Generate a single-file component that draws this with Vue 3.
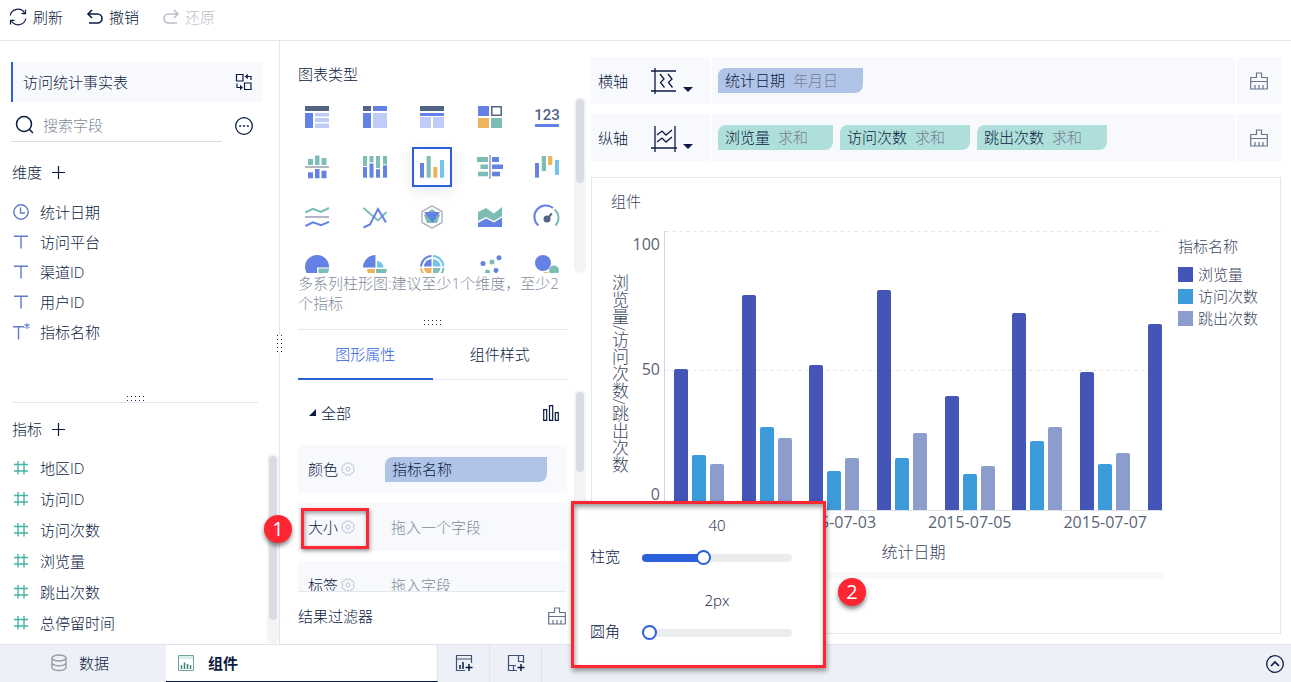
<script setup>
import { ref, computed } from 'vue'

const NAVY = '#526484'
const BLUE = '#6482e4'
const PALE = '#bfccf7'
const GREEN = '#7cbdb5'
const ORANGE = '#efb35b'
const CYAN = '#73c3ee'
const GRAY = '#b3b5c6'

const box = (x, y, w, h, fill) => ({ d: `M${x} ${y}h${w}v${h}h${-w}z`, fill })
const line = (d, stroke, width = 2) => ({ d, fill: 'none', stroke, width })
const dot = (x, y, r, fill) => ({ d: `M${x - r} ${y}a${r} ${r} 0 1 0 ${2 * r} 0a${r} ${r} 0 1 0 ${-2 * r} 0z`, fill })

const chartTypes = [
  { name: '分组表', shapes: [box(0, 1, 24, 5, NAVY), box(0, 8, 8, 15, BLUE), box(10, 8, 14, 3.5, PALE), box(10, 13, 14, 4, PALE), box(10, 18.5, 14, 4.5, PALE)] },
  { name: '交叉表', shapes: [box(0, 1, 8, 5, NAVY), box(10, 1, 14, 5, BLUE), box(0, 8, 8, 15, BLUE), box(10, 8, 14, 15, PALE)] },
  { name: '明细表', shapes: [box(0, 1, 24, 5, NAVY), box(0, 8, 24, 3, BLUE), box(0, 12, 11, 11, PALE), box(13, 12, 11, 11, PALE)] },
  { name: '颜色表格', shapes: [box(0, 1, 11, 10, BLUE), line('M13.8 1.8h9.4v8.4h-9.4z', NAVY, 1.5), box(0, 13, 11, 10, ORANGE), box(13, 13, 11, 10, GREEN)] },
  { name: 'KPI指标卡', text: '123', shapes: [box(0, 19, 24, 3, BLUE)] },
  { name: '对比柱状图', shapes: [box(3, 4, 5, 6, GREEN), box(10, 0.5, 4.5, 9.5, GREEN), box(16.5, 3, 5, 7, GREEN), box(0, 11, 24, 2, GRAY), box(3, 17.3, 5, 6, BLUE), box(10, 14, 4.5, 9.3, BLUE), box(16.5, 15.7, 5, 7.6, BLUE)] },
  { name: '堆积柱状图', shapes: [box(0, 1, 4, 10, GREEN), box(6.5, 1, 4, 6.3, GREEN), box(13, 1, 4, 12, GREEN), box(20, 1, 4, 8.3, GREEN), box(0, 12, 4, 10.7, BLUE), box(6.5, 8.5, 4, 14.2, BLUE), box(13, 14.3, 4, 8.4, BLUE), box(20, 10.3, 4, 12.4, BLUE)] },
  { name: '多系列柱形图', shapes: [box(0, 8, 4, 14.7, BLUE), box(6.7, 1, 4, 21.7, GREEN), box(13.3, 12, 4, 10.7, ORANGE), box(20, 5, 4, 17.7, CYAN)] },
  { name: '对比条形图', shapes: [box(-1, 2, 11, 5, GREEN), box(2.5, 9.5, 7.5, 4.5, GREEN), box(0, 16.7, 10, 4.6, GREEN), box(11, 0, 2, 24, GRAY), box(14, 2, 7, 5, BLUE), box(14, 9.5, 11, 4.5, BLUE), box(14, 16.7, 8, 4.6, BLUE)] },
  { name: '瀑布图', shapes: [box(0, 8, 4, 14.7, BLUE), box(6.7, 1, 4.3, 15, GREEN), box(13, 1, 4.3, 9, ORANGE), box(20, 5, 4, 15, CYAN)] },
  { name: '多系列折线图', shapes: [line('M.5 7.5L8 3.8l8 3.2 8-4', GREEN), line('M0 12h24', GRAY), line('M.5 21L8 17.3l8 2.9 8-3.4', BLUE)] },
  { name: '折线图', shapes: [line('M.5 3L15 15.5 23.5 7', GREEN), line('M.5 22.5L7 19.5 15 4l8 13.5', BLUE)] },
  { name: '雷达图', shapes: [line('M12 .8l10 5.7v11L12 23.2 2 17.500V6.500z', GRAY, 1.5), { d: 'M12 4l8 6-3 8H7l-3-8z', fill: GREEN }, { d: 'M4 7h16l-7.500 11z', fill: BLUE }] },
  { name: '面积图', shapes: [{ d: 'M0 7l8-4 8 5.500L24 2v9l-8 5-8-4-8 4z', fill: GREEN }, { d: 'M0 18l8-4.500 8 4 8-5V22H0z', fill: BLUE }] },
  { name: '仪表盘', shapes: [line('M3.500 20.500A11 11 0 0 1 18 3', BLUE), line('M19.500 4.500A11 11 0 0 1 20.500 20.500', GREEN), dot(12, 14, 3.5, NAVY), line('M12 14l4.800-5.500', NAVY)] },
  { name: '饼图', shapes: [{ d: 'M12 12.500h12A12 12 0 1 0 12 24z', fill: BLUE }, { d: 'M13.500 13.500H24A11 11 0 0 1 13.500 24z', fill: GREEN }] },
  { name: '玫瑰图', shapes: [{ d: 'M12.500 12.500H0A12.500 12.500 0 0 1 12.500 0z', fill: BLUE }, { d: 'M14 12.500V6A6.500 6.500 0 0 1 20.500 12.500z', fill: CYAN }, { d: 'M13 14h11A11 11 0 0 1 13 24z', fill: GREEN }, { d: 'M12 14H4A8 8 0 0 0 12 22z', fill: ORANGE }] },
  { name: '多层饼图', shapes: [line('M1 11.500A11 11 0 0 1 11.500 1', BLUE), line('M13 1A11 11 0 0 1 23.500 11.500', CYAN), line('M23.500 13A11 11 0 0 1 13 23', GREEN), line('M1 13A11 11 0 0 0 11.500 23', ORANGE), { d: 'M11.500 11.500H4A8 8 0 0 1 11.500 4z', fill: BLUE }, { d: 'M13 11.500V4A8 8 0 0 1 20.500 11.500z', fill: CYAN }, { d: 'M13 13h7.500A8 8 0 0 1 13 20z', fill: GREEN }, { d: 'M11.500 13H4A8 8 0 0 0 11.500 20z', fill: ORANGE }] },
  { name: '散点图', shapes: [dot(5, 8.5, 2.5, BLUE), dot(14, 7, 2.5, GREEN), dot(21, 2.7, 2.5, BLUE), dot(9.5, 17, 2.5, GREEN), dot(18, 15.5, 2.5, BLUE)] },
  { name: '气泡图', shapes: [dot(8, 8, 8, BLUE), dot(19, 15.5, 5, GREEN), dot(11, 21, 4, ORANGE)] },
]
const activeType = ref('多系列柱形图')

const dimensions = [
  { name: '统计日期', kind: 'date' },
  { name: '访问平台', kind: 'text' },
  { name: '渠道ID', kind: 'text' },
  { name: '用户ID', kind: 'text' },
  { name: '指标名称', kind: 'derived' },
]
const measures = ['地区ID', '访问ID', '访问次数', '浏览量', '跳出次数', '总停留时间']

const axes = [
  { name: '横轴', kind: 'x', fields: [{ name: '统计日期', mode: '年月日' }] },
  { name: '纵轴', kind: 'y', fields: [{ name: '浏览量', mode: '求和' }, { name: '访问次数', mode: '求和' }, { name: '跳出次数', mode: '求和' }] },
]

const series = ['浏览量', '访问次数', '跳出次数']
const days = [
  { label: '2015-07-01', values: [50.5, 19.6, 16.4] },
  { label: '', values: [77, 29.9, 25.9] },
  { label: '2015-07-03', values: [52, 13.9, 18.7] },
  { label: '', values: [78.9, 18.7, 27.7] },
  { label: '2015-07-05', values: [40.7, 12.9, 15.6] },
  { label: '', values: [70.7, 24.6, 29.9] },
  { label: '2015-07-07', values: [49.6, 16.5, 20.6] },
  { label: '', values: [66.7, 22, 18] },
]

const barWidth = ref(40)
const radius = ref(2)
const radiusFill = computed(() => radius.value - 2)
</script>

<template>
  <div class="page">
    <header class="topbar">
      <button class="tool">
        <svg width="18" height="18" viewBox="0 0 18 18" fill="none" stroke="currentColor" stroke-width="1.2">
          <path d="M1.200 7.500A7.800 7.800 0 0 1 15.500 5M16.800 10.500A7.800 7.800 0 0 1 2.500 13" />
          <path d="M16.500 1.500v4.200h-4M1.500 16.500v-4.200h4" />
        </svg>刷新
      </button>
      <button class="tool">
        <svg width="16" height="18" viewBox="0 0 16 18" fill="none" stroke="currentColor" stroke-width="1.600">
          <path d="M5 2L1 6l4 4M1 6h9.500a4.500 4.500 0 0 1 0 9H2" />
        </svg>撤销
      </button>
      <button class="tool" disabled>
        <svg width="16" height="18" viewBox="0 0 16 18" fill="none" stroke="currentColor" stroke-width="1.600">
          <path d="M11 2l4 4-4 4M15 6H5.500a4.500 4.500 0 0 0 0 9H14" />
        </svg>还原
      </button>
    </header>

    <main class="workspace">
      <aside class="fields">
        <div class="dataset">
          <span>访问统计事实表</span>
          <button class="icon" aria-label="切换数据">
            <svg width="18" height="18" viewBox="0 0 18 18" fill="none" stroke="currentColor" stroke-width="1.200">
              <path d="M1.500 1.500h6.500v6.500h-6.500zM9.500 10h6.500v6.500H9.500zM16 7V3.500h-5M2 10.500v4h4.500" />
              <path d="M12.800.8v5.400L9.800 3.500zM5 11.800v5.400l3-2.700z" fill="currentColor" stroke="none" />
            </svg>
          </button>
        </div>
        <div class="search">
          <label class="searchbox">
            <svg width="20" height="20" viewBox="0 0 20 20" fill="none" stroke="currentColor" stroke-width="1.500">
              <circle cx="9" cy="9" r="7.500" /><path d="M14.200 14.200l3.800 3.800" />
            </svg>
            <input type="text" placeholder="搜索字段" aria-label="搜索字段" />
          </label>
          <button class="icon" aria-label="更多">
            <svg width="20" height="20" viewBox="0 0 20 20" fill="none" stroke="currentColor" stroke-width="1.300">
              <circle cx="10" cy="10" r="8.300" />
              <path d="M5.200 10h2M9 10h2M12.800 10h2" stroke-width="1.600" />
            </svg>
          </button>
        </div>
        <section class="dims">
          <h2>维度
            <button class="icon" aria-label="添加维度"><svg width="13" height="13" viewBox="0 0 13 13"><path d="M6.500 0v13M0 6.500h13" stroke="currentColor" stroke-width="1.200" /></svg></button>
          </h2>
          <ul>
            <li v-for="f in dimensions" :key="f.name">
              <svg class="dim-icon" width="18" height="18" viewBox="0 0 18 18" fill="none" stroke="currentColor" stroke-width="1.400">
                <template v-if="f.kind === 'date'">
                  <circle cx="9" cy="9" r="7.200" /><path d="M8.500 4.500V10H13" />
                </template>
                <path v-else-if="f.kind === 'text'" d="M2 3.200h14M9 3.200V15.500" />
                <template v-else>
                  <path d="M1 3.700h11M6.500 3.700V16.500" /><path d="M15 0v6M12.400 1.500l5.200 3M17.600 1.500l-5.200 3" stroke-width="1.100" />
                </template>
              </svg>
              {{ f.name }}
            </li>
          </ul>
        </section>
        <section class="meas">
          <span class="grip grip-h"></span>
          <h2>指标
            <button class="icon" aria-label="添加指标"><svg width="13" height="13" viewBox="0 0 13 13"><path d="M6.500 0v13M0 6.500h13" stroke="currentColor" stroke-width="1.200" /></svg></button>
          </h2>
          <div class="meas-body">
            <ul>
              <li v-for="m in measures" :key="m">
                <svg class="meas-icon" width="18" height="18" viewBox="0 0 18 18" fill="none" stroke="currentColor" stroke-width="1.400">
                  <path d="M2 5.500h14M2 12h14M6 2v13.500M12 2v13.500" />
                </svg>
                {{ m }}
              </li>
            </ul>
            <div class="scroll"><i class="thumb thumb-long"></i></div>
          </div>
        </section>
        <span class="grip grip-v"></span>
      </aside>

      <section class="config">
        <h2 class="config-title">图表类型</h2>
        <div class="types-wrap">
          <div class="types">
            <button v-for="t in chartTypes" :key="t.name" class="type" :class="{ on: t.name === activeType }" :aria-label="t.name" @click="activeType = t.name">
              <svg width="24" height="24" viewBox="0 0 24 24">
                <text v-if="t.text" class="digits" x="12" y="15" text-anchor="middle">{{ t.text }}</text>
                <path v-for="(s, i) in t.shapes" :key="i" :d="s.d" :fill="s.fill" :stroke="s.stroke" :stroke-width="s.width" />
              </svg>
            </button>
          </div>
          <div class="scroll"><i class="thumb"></i></div>
        </div>
        <p class="hint">多系列柱形图:建议至少1个维度，至少2个指标</p>
        <div class="grip-row"><span class="grip"></span></div>
        <nav class="tabs">
          <button class="tab on">图形属性</button>
          <button class="tab">组件样式</button>
        </nav>
        <div class="props-wrap">
          <div class="props">
            <div class="all">
              <i class="fold"></i><span>全部</span>
              <svg width="18" height="18" viewBox="0 0 18 18" fill="none" stroke="currentColor" stroke-width="1.200">
                <path d="M1.700 5.700h3v10.600h-3zM7.500 1.700h3.200v14.600H7.500zM13.300 8.700h3v7.600h-3z" />
              </svg>
            </div>
            <div v-for="p in ['颜色', '大小', '标签']" :key="p" class="prop">
              <span>{{ p }}</span>
              <svg class="gear" width="14" height="14" viewBox="0 0 14 14" fill="none" stroke="currentColor">
                <path d="M4.300 1.200L5.500.700 7 1.800 8.500.700 9.700 1.200 10.400 2.900 12 3.200 13.200 5.200 12.200 7 13.200 8.800 12 10.800 10.400 11.100 9.700 12.800 8.500 13.300 7 12.200 5.500 13.300 4.300 12.800 3.600 11.100 2 10.800.800 8.800 1.800 7 .800 5.200 2 3.200 3.600 2.900z" /><circle cx="7" cy="7" r="2" />
              </svg>
              <div v-if="p === '颜色'" class="chip chip-blue chip-fill">指标名称</div>
              <div v-else class="drop">{{ p === '大小' ? '拖入一个字段' : '拖入字段' }}</div>
            </div>
          </div>
          <div class="scroll"><i class="thumb"></i></div>
        </div>
        <div class="filter">
          <span>结果过滤器</span>
          <button class="icon" aria-label="清空过滤器">
            <svg class="brush" width="18" height="18" viewBox="0 0 18 18"><path d="M6.500 1h5v4.500h5.800V17H.700V5.500h5.800zM.700 9.500h16.600M5 13v4M9 13v4M13 13v4" /></svg>
          </button>
        </div>
      </section>

      <section class="canvas">
        <div v-for="a in axes" :key="a.name" class="axis">
          <div class="axis-head">
            <span>{{ a.name }}</span>
            <button class="icon axis-kind" :aria-label="a.name + '设置'">
              <svg width="28" height="28" viewBox="0 0 28 28" fill="none" stroke="currentColor" stroke-width="1.300">
                <path v-if="a.kind === 'x'" d="M1 4h25M1 24h25M5 1v26M10 7l4 5-3.500 3.500 4 5M18 7l4 5-3.500 3.500 4 5" />
                <path v-else d="M1 24h26M5 2v26M25 2v26M7 11l5-4 4 4 6-5M7 18l5-4 4 4 6-5" />
              </svg>
              <i class="caret"></i>
            </button>
          </div>
          <div class="axis-fields">
            <div v-for="f in a.fields" :key="f.name" class="chip" :class="a.kind === 'x' ? 'chip-blue' : 'chip-green'">
              {{ f.name }}<span>{{ f.mode }}</span>
            </div>
          </div>
          <button class="icon axis-clear" :aria-label="'清空' + a.name">
            <svg class="brush" width="18" height="18" viewBox="0 0 18 18"><path d="M6.500 1h5v4.500h5.800V17H.700V5.500h5.800zM.700 9.500h16.600M5 13v4M9 13v4M13 13v4" /></svg>
          </button>
        </div>

        <article class="card">
          <h3>组件</h3>
          <div class="chart">
            <div class="y-title">浏览量/访问次数/跳出次数</div>
            <div class="y-ticks"><span>100</span><span>50</span><span>0</span></div>
            <div class="plot">
              <div v-for="(d, i) in days" :key="i" class="group">
                <i v-for="(v, s) in d.values" :key="s" class="bar" :class="'s' + s" :style="{ height: v + '%' }"></i>
              </div>
            </div>
            <div class="legend">
              <span>指标名称</span>
              <ul>
                <li v-for="(s, i) in series" :key="s"><i class="swatch" :class="'s' + i"></i>{{ s }}</li>
              </ul>
            </div>
            <div class="x-axis">
              <div class="x-ticks"><span v-for="(d, i) in days" :key="i">{{ d.label }}</span></div>
              <div class="x-title">统计日期</div>
              <div class="x-scroll"></div>
            </div>
          </div>
        </article>
      </section>

      <div class="mark"></div>
      <div class="badge badge-1">1</div>
      <div class="badge badge-2">2</div>
      <div class="popup">
        <label for="bar-width">柱宽</label>
        <div class="slide">
          <output for="bar-width">{{ barWidth }}</output>
          <input id="bar-width" v-model.number="barWidth" type="range" min="0" max="100" :style="{ '--fill': barWidth + '%' }" />
        </div>
        <label for="radius">圆角</label>
        <div class="slide">
          <output for="radius">{{ radius }}px</output>
          <input id="radius" v-model.number="radius" type="range" min="2" max="102" :style="{ '--fill': radiusFill + '%' }" />
        </div>
      </div>
    </main>

    <footer class="bottom">
      <button class="sheet sheet-data">
        <svg width="16" height="18" viewBox="0 0 16 18" fill="none" stroke="#9a9ca6" stroke-width="1.400">
          <ellipse cx="8" cy="4" rx="7" ry="3" /><path d="M1 4v9.500c0 1.600 3 3 7 3s7-1.400 7-3V4M1 8.700c0 1.600 3 3 7 3s7-1.400 7-3" />
        </svg>数据
      </button>
      <button class="sheet sheet-on">
        <svg width="16" height="16" viewBox="0 0 16 16" fill="none" stroke="#6fa39b">
          <path d="M.500.500h15v15H.500z" fill="#fff" /><path d="M1 2.500h14" stroke="#d9efec" stroke-width="3" />
          <path d="M3.500 10v4M6.500 7.500V14M9.500 9v5M12.500 10v4" stroke="#3d8278" stroke-width="1.500" />
        </svg>组件
      </button>
      <button class="sheet sheet-add" aria-label="添加组件">
        <svg width="18" height="18" viewBox="0 0 18 18" fill="none" stroke="#3f5371" stroke-width="1.200">
          <path d="M16.500 9V1.500h-15v15H10M1.500 5h15" /><path d="M5 11v4M8 8v7M10.500 13.500h7M14 10v7" stroke="#0b1b41" stroke-width="1.500" />
        </svg>
      </button>
      <button class="sheet sheet-add" aria-label="添加仪表板">
        <svg width="18" height="18" viewBox="0 0 18 18" fill="none" stroke="#3f5371" stroke-width="1.200">
          <path d="M16.500 9V1.500h-15v15H10M1.500 11.500H9M11.500 1.500V8M11.500 7.500h5M6.500 11.500v5" /><path d="M10.500 13.500h7M14 10v7" stroke="#0b1b41" stroke-width="1.500" />
        </svg>
      </button>
      <button class="icon expand" aria-label="展开">
        <svg width="20" height="20" viewBox="0 0 20 20" fill="none" stroke="currentColor" stroke-width="1.300">
          <circle cx="10" cy="10" r="8.300" /><path d="M6 12l4-4 4 4" stroke-width="1.700" />
        </svg>
      </button>
    </footer>
  </div>
</template>

<style>
body {
  margin: 0;
}
</style>

<style scoped>
.page {
  display: flex;
  flex-direction: column;
  height: 100vh;
  min-height: 640px;
  overflow: hidden;
  background: #fff;
  color: #0b1b41;
  font: 300 15px/20px "Open Sans", "Noto Sans CJK SC", sans-serif;
}
.page * {
  box-sizing: border-box;
}
button,
input {
  margin: 0;
  padding: 0;
  border: 0;
  background: none;
  color: inherit;
  font: inherit;
}
button {
  cursor: pointer;
}
h2,
h3,
p,
ul {
  margin: 0;
  padding: 0;
  font: inherit;
  list-style: none;
}
svg {
  flex: none;
  display: block;
  overflow: visible;
}
.icon {
  display: flex;
  align-items: center;
  justify-content: center;
  flex: none;
}

/* top bar */
.topbar {
  display: flex;
  flex: none;
  gap: 24px;
  height: 41px;
  padding: 0 9px 6px;
  border-bottom: 1px solid #e4e6ee;
}
.tool {
  display: flex;
  align-items: center;
  gap: 6px;
}
.tool:disabled {
  color: #b9bfca;
  cursor: default;
}

.workspace {
  position: relative;
  display: flex;
  flex: 1;
  min-height: 0;
}

/* field list */
.fields {
  position: relative;
  display: flex;
  flex-direction: column;
  flex: none;
  width: 280px;
  padding: 21px 0 0 11px;
  border-right: 1px solid #e4e6ee;
}
.dataset {
  display: flex;
  align-items: center;
  justify-content: space-between;
  height: 40px;
  margin-right: 16px;
  padding: 0 10px;
  border-left: 2px solid #2c60db;
  background: #f8f9fd;
}
.search {
  display: flex;
  align-items: center;
  gap: 12px;
  height: 40px;
}
.search .icon {
  margin-top: 8px;
}
.searchbox {
  display: flex;
  align-items: center;
  gap: 8px;
  width: 211px;
  height: 40px;
  padding: 13px 0 6px 4px;
  border-bottom: 1px solid #d9dbe6;
}
.searchbox input {
  flex: 1;
  min-width: 0;
  outline: 0;
}
.searchbox input::placeholder {
  color: #7f8a9c;
  opacity: 1;
}
.dims {
  flex: 1;
  padding-top: 20px;
}
.fields h2 {
  display: flex;
  align-items: center;
  gap: 10px;
  padding-left: 1px;
}
.dims ul {
  padding-top: 15px;
}
.fields li {
  display: flex;
  align-items: center;
  gap: 10px;
  height: 30px;
  padding-left: 1px;
}
.dim-icon {
  color: #5f7dcc;
}
.meas-icon {
  color: #48b3a5;
}
.meas {
  position: relative;
  flex: none;
}
.meas h2 {
  margin: 0 21px 0 1px;
  padding: 16px 0 13px;
  border-top: 1px solid #e4e6ee;
}
.meas-body {
  display: flex;
  justify-content: space-between;
  height: 192px;
}
.meas-body .scroll {
  margin-top: 2px;
}
.meas li {
  height: 31px;
}
.scroll {
  flex: none;
  width: 12px;
  padding: 2px;
  border-radius: 6px;
  background: #f3f4f6;
}
.thumb {
  display: block;
  height: 49%;
  border-radius: 4px;
  background: #d9dce2;
}
.thumb-long {
  height: 88%;
}
.grip {
  width: 17px;
  height: 5px;
  background: conic-gradient(at 1px 1px, transparent 75%, #1c2b4f 0) 0 0 / 4px 4px;
}
.grip-h {
  position: absolute;
  top: -6px;
  left: 116px;
}
.grip-v {
  position: absolute;
  top: 294px;
  right: -3px;
  width: 5px;
  height: 17px;
  background-color: #fff;
}

/* chart configuration */
.config {
  display: flex;
  flex-direction: column;
  flex: none;
  width: 306px;
  padding-left: 18px;
}
.config-title {
  padding: 23px 0 13px;
}
.types-wrap,
.props-wrap {
  display: flex;
  justify-content: space-between;
}
.types-wrap {
  height: 176px;
}
.types {
  display: grid;
  grid-template-columns: repeat(5, 40px);
  grid-auto-rows: 40px;
  justify-content: space-between;
  gap: 10px 0;
  width: 270px;
  margin-left: -1px;
  overflow: hidden;
}
.type {
  display: flex;
  align-items: center;
  justify-content: center;
  border: 2px solid transparent;
}
.type.on {
  border-color: #2c60db;
  box-shadow: 0 4px 14px #0b1b411a;
}
.digits {
  fill: #526484;
  font: 500 15px Roboto, sans-serif;
}
.hint {
  width: 269px;
  color: #7f8a9c;
}
.grip-row {
  display: flex;
  justify-content: center;
  width: 269px;
  height: 17px;
  padding-top: 7px;
  border-bottom: 1px solid #e4e6ee;
}
.tabs {
  display: flex;
  width: 269px;
  border-bottom: 1px solid #e4e6ee;
}
.tab {
  flex: 1;
  height: 50px;
  margin-bottom: -1px;
  border-bottom: 2px solid transparent;
}
.tab.on {
  border-color: #2c60db;
  color: #2c60db;
}
.props-wrap {
  flex: 1;
  min-height: 0;
  overflow: hidden;
}
.props-wrap .scroll {
  margin-top: 10px;
}
.props-wrap .thumb {
  height: 80px;
}
.props {
  display: flex;
  flex-direction: column;
  gap: 10px;
  width: 269px;
  overflow: hidden;
}
.all {
  display: flex;
  align-items: center;
  flex: none;
  gap: 5px;
  height: 55px;
  padding: 10px 7px 0 11px;
}
.all svg {
  margin-left: auto;
}
.fold {
  border-left: 7px solid transparent;
  border-bottom: 7px solid #0b1b41;
}
.prop {
  display: flex;
  align-items: center;
  flex: none;
  height: 48px;
  padding: 0 20px 0 10px;
  background: #f8f9fd;
}
.gear {
  margin: 0 30px 0 3px;
  color: #bcc2cf;
}
.drop {
  padding-left: 6px;
  color: #7f8a9c;
}
.filter {
  display: flex;
  justify-content: space-between;
  flex: none;
  width: 268px;
  height: 53px;
  padding-top: 14px;
  border-top: 1px solid #e4e6ee;
}
.filter .icon {
  height: 20px;
}
.brush {
  fill: none;
  stroke: #66748c;
  stroke-width: 1.2px;
}
.chip {
  height: 25px;
  padding: 2px 25px 2px 7px;
  border-radius: 8px 0;
  line-height: 20px;
}
.chip span {
  margin-left: 8px;
  color: #787f95;
}
.chip-blue {
  background: #b0c4e8;
}
.chip-green {
  background: #aedfda;
}
.chip-fill {
  flex: 1;
}

/* axes and chart */
.canvas {
  display: flex;
  flex-direction: column;
  flex: 1;
  gap: 10px;
  min-width: 0;
  padding: 16px 10px 10px 5px;
}
.axis {
  display: flex;
  flex: none;
  gap: 2px;
  height: 47px;
}
.axis > * {
  background: #f8f9fd;
}
.axis-head {
  display: flex;
  align-items: center;
  gap: 22px;
  width: 119px;
  padding-left: 7px;
}
.axis-kind {
  gap: 5px;
}
.caret {
  margin-top: 18px;
  border: 5px solid transparent;
  border-top-color: #0b1b41;
  border-bottom: 0;
}
.axis-fields {
  display: flex;
  align-items: center;
  flex: 1;
  gap: 7px;
  padding-left: 6px;
}
.axis-clear {
  width: 44px;
}
.card {
  display: flex;
  flex-direction: column;
  flex: 1;
  min-height: 0;
  margin-top: 6px;
  padding: 13px 10px 54px 19px;
  border: 1px solid #e4e6ee;
  color: #3c465e;
}
.chart {
  display: grid;
  flex: 1;
  grid-template-columns: 16px 36px minmax(0, 1fr) 92px;
  grid-template-rows: minmax(0, 1fr) auto;
  margin-top: 20px;
  font-size: 16px;
}
.y-title {
  align-self: center;
  margin-top: 5px;
  font-size: 17px;
  line-height: 16px;
  writing-mode: vertical-rl;
}
.y-ticks,
.x-ticks {
  color: #5a6378;
  font-weight: 400;
}
.y-ticks {
  display: flex;
  flex-direction: column;
  justify-content: space-between;
  padding: 3px 3px 7px 0;
  text-align: right;
}
.plot {
  display: flex;
  align-items: stretch;
  margin: 0 15px 0 1px;
  overflow: hidden;
  border-left: 1px solid #d3d5da;
  border-bottom: 1px solid #e2e3e6;
  background:
    repeating-linear-gradient(90deg, #e6e7ea 0 4px, transparent 4px 7px) 0 0 / 100% 1px no-repeat,
    repeating-linear-gradient(90deg, #e6e7ea 0 4px, transparent 4px 7px) 0 50% / 100% 1px no-repeat;
}
.group {
  display: flex;
  align-items: flex-end;
  justify-content: center;
  flex: 0 0 13.6%;
  gap: 4px;
}
.bar {
  width: 14px;
  border-radius: 2px 2px 0 0;
}
.s0 {
  background: #4356b7;
}
.s1 {
  background: #3c9bdb;
}
.s2 {
  background: #8b9ccd;
}
.legend {
  padding-top: 5px;
  font-size: 15px;
}
.legend ul {
  padding-top: 7px;
}
.legend li {
  display: flex;
  align-items: center;
  gap: 5px;
  height: 22px;
}
.swatch {
  width: 15px;
  height: 15px;
}
.x-axis {
  grid-column: 3;
  margin: 0 15px 0 1px;
}
.x-ticks {
  display: flex;
  padding: 1px 0 10px 1px;
  overflow: hidden;
}
.x-ticks span {
  display: flex;
  justify-content: center;
  flex: 0 0 13.6%;
  min-width: 0;
  white-space: nowrap;
}
.x-title {
  text-align: center;
}
.x-scroll {
  height: 7px;
  margin-top: 10px;
  border-radius: 4px;
  background: #f9f9f9;
}

/* callouts */
.mark,
.popup,
.badge {
  position: absolute;
  z-index: 2;
}
.mark {
  top: 467px;
  left: 301px;
  width: 68px;
  height: 41px;
  border: 3px solid #fe2632;
  box-shadow: 1px 2px 4px #0006, inset 1px 2px 4px #0006;
}
.badge {
  width: 28px;
  height: 28px;
  border-radius: 50%;
  background: #fe2632;
  box-shadow: 0 3px 4px #0007;
  color: #fff;
  font-size: 20px;
  font-weight: 400;
  line-height: 28px;
  text-align: center;
}
.badge-1 {
  top: 474px;
  left: 264px;
}
.badge-2 {
  top: 537px;
  left: 838px;
}
.popup {
  top: 460px;
  left: 571px;
  display: grid;
  grid-template-columns: 51px 150px;
  row-gap: 24px;
  width: 255px;
  padding: 11px 16px 24px;
  border: 3px solid #fe2632;
  background: #fff;
  box-shadow: 1px 3px 5px #0006, inset 1px 3px 5px #0006;
}
.popup label {
  align-self: end;
}
.slide {
  display: flex;
  flex-direction: column;
  gap: 15px;
  height: 51px;
  margin-left: 1px;
}
.slide output {
  width: 150px;
  text-align: center;
}
.slide input {
  width: 150px;
  height: 16px;
  appearance: none;
  outline: 0;
}
.slide input::-webkit-slider-runnable-track {
  height: 8px;
  border-radius: 4px;
  background: linear-gradient(#2c60db, #2c60db) 0 0 / var(--fill) 100% no-repeat #ebeced;
}
.slide input::-webkit-slider-thumb {
  width: 15px;
  height: 15px;
  margin-top: -4px;
  border: 2px solid #2c60db;
  border-radius: 50%;
  appearance: none;
  background: #fff;
}

/* sheet bar */
.bottom {
  display: flex;
  flex: none;
  height: 38px;
  border-top: 1px solid #e0e3eb;
  background: #edf0f6;
}
.sheet {
  display: flex;
  align-items: center;
  padding-bottom: 2px;
}
.sheet-data {
  gap: 12px;
  width: 166px;
  padding-left: 51px;
}
.sheet-on {
  gap: 14px;
  width: 272px;
  padding-bottom: 0;
  padding-left: 12px;
  border-right: 1px solid #e0e3eb;
  border-bottom: 1px solid #0b1b41;
  background: #fff;
  font-weight: 700;
}
.sheet-add {
  justify-content: center;
  width: 52px;
  border-right: 1px solid #e0e3eb;
}
.expand {
  margin: 0 6px 0 auto;
}
</style>
